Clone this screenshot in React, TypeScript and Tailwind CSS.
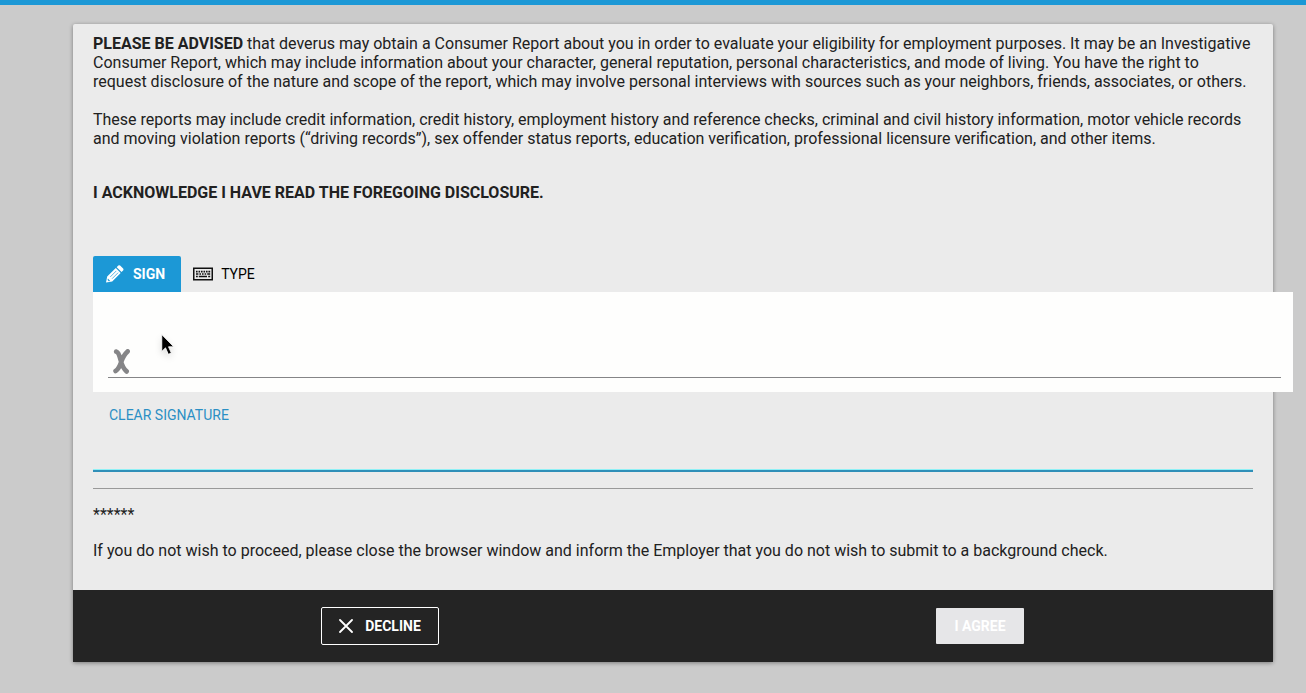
import React from "react";

const PencilIcon = () => (
  <svg viewBox="0 0 18 18" className="w-[18px] h-[18px]" aria-hidden="true">
    <path
      fill="#fff"
      d="M0 17.6L1.2 11.6 9.8 3l4.9 4.9L6.2 16.4zM10.7 2.2L12.3.6q.9-.8 1.8 0l3 3q.8.9 0 1.8L15.5 7z"
    />
    <path
      fill="none"
      stroke="#1c98d6"
      strokeWidth="0.7"
      d="M4.3 11.9l6-6M6.1 13.7l6-6"
    />
    <path fill="#1c98d6" d="M1.9 13.6l2.3 2.3-1.4.3-1.2-1.2z" />
  </svg>
);

const KeyboardIcon = () => (
  <svg viewBox="0 0 20 14" className="w-5 h-[14px]" aria-hidden="true">
    <rect x="0.75" y="1.25" width="18.5" height="11.5" fill="none" stroke="#111" strokeWidth="1.5" />
    <path
      fill="none"
      stroke="#111"
      strokeWidth="1.6"
      d="M3 4.6h1.6M5.5 4.6h1.6M8 4.6h1.6M10.5 4.6h1.6M13 4.6h1.6M15.4 4.6h1.8M3 7h2.4M6.4 7H8M9 7h1.6M11.6 7h1.6M14.2 7h3M3 9.5h1.8M5.8 9.5h8.2M15.2 9.5h2"
    />
  </svg>
);

const CloseIcon = () => (
  <svg viewBox="0 0 14 14" className="w-[14px] h-[14px]" aria-hidden="true">
    <path d="M1 1l12 12M13 1L1 13" stroke="#fff" strokeWidth="1.8" strokeLinecap="round" />
  </svg>
);

const Cursor = () => (
  <svg
    viewBox="0 0 14 22"
    className="absolute left-[67px] top-[41px] w-[15px] h-[23px] drop-shadow-md"
    aria-hidden="true"
  >
    <path
      d="M1.5 1.5v16.2l3.6-3.5 2.7 6.2 2.9-1.2-2.7-6h5z"
      fill="#000"
      stroke="#fff"
      strokeWidth="0.8"
    />
  </svg>
);

const SignaturePad = () => (
  <div className="relative -mr-10 h-[100px] bg-[#fefefd] pl-[15px] pr-3">
    <div className="flex h-[86px] items-end border-b border-[#858587] pb-[3px] pl-[5px]">
      <svg viewBox="0 0 17 25" className="w-[17px] h-[25px]" aria-hidden="true">
        <path
          d="M3.2 2.6Q5.6 3 7.6 11T13.6 22.4M14.6 2.4Q10.5 6 8.2 13T2.6 22"
          fill="none"
          stroke="#858587"
          strokeWidth="4.7"
          strokeLinecap="round"
        />
      </svg>
    </div>
    <Cursor />
  </div>
);

const App = () => {
  return (
    <div className="min-h-screen bg-[#cbcbcb] border-t-[5px] border-[#1c98d6] pt-[19px] pl-[73px] pr-[33px] pb-[31px] font-['Roboto',sans-serif] text-base leading-[19px] text-[#212121]">
      <main className="rounded-[2px] bg-[#ebebeb] shadow-[0_1px_4px_rgba(0,0,0,0.4)]">
        <div className="flex flex-col px-5 pt-[10px] pb-[30px]">
          <p>
            <strong className="font-bold">PLEASE BE ADVISED</strong> that
            deverus may obtain a Consumer Report about you in order to evaluate
            your eligibility for employment purposes. It may be an Investigative
            Consumer Report, which may include information about your character,
            general reputation, personal characteristics, and mode of living.
            You have the right to request disclosure of the nature and scope of
            the report, which may involve personal interviews with sources such
            as your neighbors, friends, associates, or others.
          </p>
          <p className="mt-[19px]">
            These reports may include credit information, credit history,
            employment history and reference checks, criminal and civil history
            information, motor vehicle records and moving violation reports
            (“driving records”), sex offender status reports, education
            verification, professional licensure verification, and other items.
          </p>
          <p className="mt-[35px] font-bold">
            I ACKNOWLEDGE I HAVE READ THE FOREGOING DISCLOSURE.
          </p>
          <div className="mt-[54px] flex text-sm leading-9 text-black">
            <button className="flex h-9 items-center gap-[9px] rounded-t-[2px] bg-[#1c98d6] pl-[13px] pr-4 font-bold text-white">
              <PencilIcon />
              SIGN
            </button>
            <button className="flex h-9 items-center gap-2 px-3">
              <KeyboardIcon />
              TYPE
            </button>
          </div>
          <SignaturePad />
          <button className="mt-[5px] h-9 self-start px-4 text-sm text-[#2b8fc4]">
            CLEAR SIGNATURE
          </button>
          <hr className="mt-9 h-[3px] border-t border-b-2 border-t-[#8ff0f5] border-b-[#2f8fb8]" />
          <hr className="mt-4 border-[#999]" />
          <p className="mt-4">******</p>
          <p className="mt-[17px]">
            If you do not wish to proceed, please close the browser window and
            inform the Employer that you do not wish to submit to a background
            check.
          </p>
        </div>
        <footer className="grid h-[72px] grid-cols-2 items-center bg-[#242424] text-sm font-bold text-white">
          <div className="flex justify-center pl-[14px]">
            <button className="flex h-[38px] items-center gap-3 rounded-[2px] border border-white px-[17px]">
              <CloseIcon />
              DECLINE
            </button>
          </div>
          <div className="flex justify-center pl-[14px]">
            <button disabled className="h-9 rounded-[1px] bg-[#e6e6e8] px-[18px]">
              I AGREE
            </button>
          </div>
        </footer>
      </main>
    </div>
  );
};

export default App;
